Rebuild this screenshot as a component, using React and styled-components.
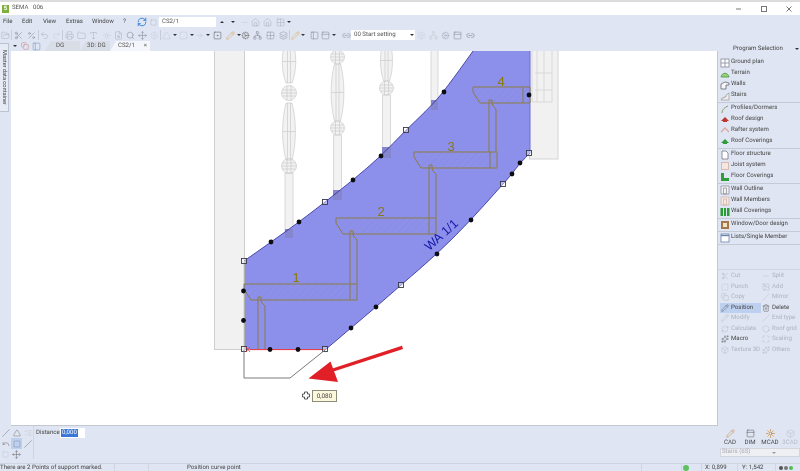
import React from 'react';
import styled, { createGlobalStyle } from 'styled-components';
import {
  FolderOpen, Scissors, Percent, Undo2, Redo2, Printer, Folder, Type, Sun, FileSearch, Search, Move, Settings,
  Triangle, Square, ArrowRight, SquareDot, Pencil, Cog, Grid2x2, Layers, Network, Minus, PanelTop, ListChecks,
  Hexagon, PanelLeft, Copy, Slash, Trash2, RefreshCw, SquareDashed, Image, Sparkles, Maximize, Box, Undo, Home, Link2
} from 'lucide-react';

const Global = createGlobalStyle`
  html, body { margin: 0; padding: 0; background: #dfe5f2; }
  * { box-sizing: border-box; }
  #root { width: 800px; height: 471px; overflow: hidden; }
`;

const Window = styled.div`
  width: 800px; height: 471px; overflow: hidden; display: flex; flex-direction: column;
  background: #dfe5f2; color: #444; font: 6.1px/1 Roboto, "Liberation Sans", sans-serif;
  text-rendering: geometricPrecision;
  filter: blur(0.3px);
`;
const TitleBar = styled.div`
  height: 15px; flex: none; background: #fff; border-top: 2px solid #dcdcdc;
  display: flex; align-items: center; padding-left: 2px; gap: 3px;
`;
const Logo = styled.div`
  width: 7px; height: 8px; background: #7fb23c; color: #fff; font-size: 6px; font-weight: 700;
  display: flex; align-items: center; justify-content: center;
`;
const Title = styled.span`flex: 1; color: #555; white-space: pre;`;
const WinBtn = styled.div`width: 22px; display: flex; justify-content: center; color: #777;`;
const MenuBar = styled.div`height: 14px; flex: none; display: flex; align-items: center;`;
const Menu = styled.span`width: ${p => p.$w}px; flex: none; padding-left: 3px; color: #444;`;
const Combo = styled.div`
  width: ${p => p.$w}px; height: 10px; flex: none; background: #fff; color: #555; padding-left: 3px;
  display: flex; align-items: center; justify-content: space-between;
`;
const Caret = styled.i`
  display: block; flex: none; width: 0; height: 0; margin: 0 auto;
  border-left: 2px solid transparent; border-right: 2px solid transparent;
  border-${p => (p.$up ? 'bottom' : 'top')}: 2px solid ${p => p.$c || '#333'};
`;
const EndCaret = styled(Caret)`margin: 0 1px 0 0;`;
const ToolBar = styled.div`height: 12px; flex: none; display: flex; align-items: center;`;
const Cell = styled.div`
  width: ${p => p.$w}px; height: 11px; flex: none; display: flex; align-items: center; justify-content: center;
  color: ${p => p.$c || '#a4a9b4'};
`;
const VSep = styled.div`width: 1px; height: 10px; flex: none; background: #c6ccd8;`;
const Work = styled.div`flex: 1; min-height: 0; display: flex;`;
const LeftArea = styled.div`width: 718px; flex: none; display: flex; flex-direction: column;`;
const UpperRow = styled.div`height: 385px; flex: none; display: flex;`;
const Rail = styled.div`width: 11px; flex: none; padding: 2px 0 0 0;`;
const RailTab = styled.div`
  width: 9px; height: 69px; background: #e6ebf5; border: 1px solid #bcc3d0; border-left: none;
  writing-mode: vertical-rl; text-align: center; font-size: 5.6px; line-height: 8px; color: #444;
`;
const Center = styled.div`width: 707px; flex: none; display: flex; flex-direction: column;`;
const TabStrip = styled.div`height: 10px; flex: none; display: flex; align-items: flex-end;`;
const StripIcon = styled.div`width: ${p => p.$w}px; flex: none; height: 10px; display: flex; align-items: center; justify-content: center; color: ${p => p.$c || '#6a86b8'};`;
const Tab = styled.div`
  width: ${p => p.$w}px; height: 10px; flex: none; display: flex; align-items: center; justify-content: space-between;
  padding: 0 3px 0 ${p => p.$pl}px; color: #555; white-space: nowrap;
  background: ${p => (p.$active ? '#f4f6fb' : '#d9dde6')};
  clip-path: polygon(0 100%, 6px 0, 100% 0, 100% 100%);
`;
const Canvas = styled.div`
  height: 375px; flex: none; position: relative; background: #fff; border-right: 1px solid #c3c7cf; border-bottom: 1px solid #c3c7cf;
  svg { display: block; }
`;
const Hint = styled.div`
  position: absolute; left: 301px; top: 339px; width: 25px; height: 12px; background: #fbf8dc; border: 1px solid #8d8d7a;
  display: flex; align-items: center; justify-content: center; color: #444; font-size: 6.3px;
`;
const BottomPanel = styled.div`flex: 1; display: flex; min-height: 0;`;
const Nudge = styled.div`
  width: 34px; flex: none; display: grid; grid-template-columns: repeat(3, 11px); grid-auto-rows: 11px; padding-top: 1px;
  border-right: 1px solid #cfd5e2; height: 33px;
`;
const NudgeBtn = styled.div`
  display: flex; align-items: center; justify-content: center; color: ${p => (p.$dim ? '#b6bbc6' : '#555')};
  background: ${p => (p.$on ? '#bdd0ef' : 'transparent')};
`;
const DistanceRow = styled.div`display: flex; align-items: flex-start; padding: 2px 0 0 2px; gap: 1px;`;
const DistanceLabel = styled.span`line-height: 10px; width: 23px;`;
const DistanceBox = styled.div`width: 25px; height: 10px; background: #fff; padding-left: 1px; display: flex; align-items: center;`;
const Selected = styled.span`background: #3a76d6; color: #fff; line-height: 8px; padding: 0 1px;`;
const RightPanel = styled.div`width: 82px; flex: none; display: flex; flex-direction: column; padding-bottom: 6px;`;
const PanelHead = styled.div`height: 15px; margin-bottom: 1px; flex: none; display: flex; align-items: center; padding: 1px 0 0 15px; color: #444;`;
const HeadText = styled.span`width: 60px; white-space: nowrap;`;
const Sep = styled.div`height: 2px; flex: none; border-bottom: 1px solid #c4cad6;`;
const Row = styled.div`height: 11px; flex: none; display: flex; align-items: center; padding-left: 2px; gap: 1px; color: #444; white-space: nowrap;`;
const ToolGrid = styled.div`
  margin-top: 24px; border-top: 1px solid #cfd5e2; padding: 1px 0 0 2px; display: grid;
  grid-template-columns: 41px 39px; grid-auto-rows: 10.5px;
`;
const ToolItem = styled.div`
  display: flex; align-items: center; gap: 2px; padding-left: 1px; white-space: nowrap;
  color: ${p => (p.$on ? '#444' : '#adb3bf')};
  background: ${p => (p.$sel ? '#bdd0ef' : 'transparent')};
`;
const ModeRow = styled.div`margin-top: auto; display: grid; grid-template-columns: repeat(4, 20px); padding-left: 2px; margin-bottom: 2px;`;
const Mode = styled.div`
  display: flex; flex-direction: column; align-items: center; gap: 2px; color: ${p => (p.$dim ? '#b4bac6' : '#444')};
`;
const ModeSelect = styled.div`
  height: 9px; margin-left: 2px; background: #eeeff2; border: 1px solid #d3d6dd; color: #a8adb8; flex: none;
  display: flex; align-items: center; justify-content: space-between; padding: 0 1px;
`;
const StatusBar = styled.div`height: 8px; flex: none; display: flex; border-top: 1px solid #d0d5e0; color: #444; overflow: hidden;`;
const StatusCell = styled.div`
  width: ${p => p.$w}px; flex: none; border-right: ${p => (p.$plain ? 'none' : '1px solid #d0d5e0')}; padding: 1px 0 0 ${p => p.$pl || 0}px;
  display: flex; align-items: center; gap: 1px; white-space: nowrap;
`;
const Led = styled.i`width: ${p => p.$s}px; height: ${p => p.$s}px; border-radius: 50%; background: ${p => p.$c}; flex: none; display: block;`;

const I = ({ as: C, s = 9, w = 1.2, c }) => <C size={s} strokeWidth={w} color={c} />;

const Mini = ({ children, s = 10 }) => <svg width={s} height={s} viewBox="0 0 10 10">{children}</svg>;

const tools = [
  [FolderOpen, 11], 'sep', [Scissors, 13, '#778'], [Percent, 13, '#778'], 'sep', [Undo2, 11], [Redo2, 12, '#c6cad2'], 'sep',
  [Printer, 13], [Folder, 11], [Type, 13], [Sun, 12, '#c0c4cc'], [FileSearch, 12], [Search, 12, '#778'], [Move, 12, '#778'],
  [Settings, 12, '#c6cad2'], 'sep', [Triangle, 11, '#c0c4cc'], 'c', [Square, 12, '#c0c4cc'], 'c', [ArrowRight, 11, '#c0c4cc'], 'c',
  [SquareDot, 14, '#444'], [Pencil, 12, '#d9942c'], 'c', [Cog, 9, '#666'], [Network, 14, '#778'], [Grid2x2, 13, '#889'], [Layers, 12, '#889'], 'sep',
  [Pencil, 10, '#e0a030'], 'c', ['gap', 4], [PanelLeft, 11, '#778'], [PanelTop, 11, '#778'], 'c', ['gap', 5], [Link2, 10, '#778']
];
const tailTools = [[Settings, 12, '#c6cad2'], [Network, 13, '#c6cad2'], [Cog, 11, '#aab'], [PanelTop, 13, '#778'], [Link2, 13, '#667']];

const listIcons = {
  ground: <><rect x="1" y="1" width="8" height="8" fill="#fff" stroke="#889" strokeWidth=".8"/><path d="M5 1v8M1 5h8" stroke="#889" strokeWidth=".8"/></>,
  terrain: <><path d="M1 8c1-5 7-5 8 0z" fill="#9ccf7c" stroke="#3f9b3f" strokeWidth=".8"/></>,
  walls: <path d="M1 9V4l4-2 4 1v2H6v4z" fill="#f6f6f6" stroke="#667" strokeWidth=".8"/>,
  stairs: <path d="M1 9h8V2L6 4v2H4v1H2z" fill="#eee" stroke="#999" strokeWidth=".7"/>,
  profiles: <path d="M2 9C2 6 5 3 8 2" fill="none" stroke="#8a9a60" strokeWidth="1"/>,
  roof: <path d="M1 6l4-4 4 4-2 0v1H3V6z" fill="#c0342c"/>,
  rafter: <path d="M1 6l4-4 4 4" fill="none" stroke="#d9a8a0" strokeWidth="1.3"/>,
  covers: <path d="M1 6l4-4 4 4-2 0v1H3V6z" fill="#2f9e3a"/>,
  floor: <path d="M2 1h4l2 2v6H2z" fill="#fff" stroke="#778" strokeWidth=".8"/>,
  joist: <rect x="1.5" y="1.5" width="7" height="7" fill="#f4e6e0" stroke="#d4b0a4" strokeWidth=".8"/>,
  floorC: <path d="M1 1h3v5h5v3H1z" fill="#2f9e3a"/>,
  outline: <path d="M1 1h8v8H1zM3.5 3h3v6h-3z" fill="#f2f2f2" stroke="#889" strokeWidth=".7"/>,
  members: <path d="M1 1h8v8H1zM3.5 3h3v6h-3z" fill="#f4e6e0" stroke="#d0b0a4" strokeWidth=".7"/>,
  wallC: <path d="M0.5 1h2.5v8H.5zM4 1h2v8H4zM7 1h2.5v8H7z" fill="#2a9a34"/>,
  door: <><rect x="1" y="1" width="8" height="8" fill="#a5784c"/><rect x="3" y="3" width="4" height="4" fill="#f3e2c4"/></>,
  lists: <><rect x="1" y="1" width="8" height="8" fill="#fff" stroke="#6c86ac" strokeWidth=".8"/><path d="M1 2.5h8" stroke="#6c86ac" strokeWidth="1.4"/></>
};

const sections = [
  [['ground', 'Ground plan'], ['terrain', 'Terrain'], ['walls', 'Walls'], ['stairs', 'Stairs']],
  [['profiles', 'Profiles/Dormers'], ['roof', 'Roof design'], ['rafter', 'Rafter system'], ['covers', 'Roof Coverings']],
  [['floor', 'Floor structure'], ['joist', 'Joist system'], ['floorC', 'Floor Coverings']],
  [['outline', 'Wall Outline'], ['members', 'Wall Members'], ['wallC', 'Wall Coverings']],
  [['door', 'Window/Door design']],
  [['lists', 'Lists/Single Member']]
];

const toolItems = [
  [Scissors, 'Cut'], [Minus, 'Split'], [SquareDashed, 'Punch'], [Image, 'Add'], [Copy, 'Copy'], [Slash, 'Mirror'],
  [Pencil, 'Position', true, true], [Trash2, 'Delete', true], [Pencil, 'Modify'], [Slash, 'End type'],
  [RefreshCw, 'Calculate'], [Hexagon, 'Roof grid'], [Sparkles, 'Macro', true], [Maximize, 'Scaling'], [Box, 'Texture 3D'], [Sparkles, 'Others']
];

const vase = (t, b, w) => {
  const m = t + (b - t) * 0.5;
  return `M-3 ${t}C${-w} ${t + (b - t) * 0.3} ${-w} ${t + (b - t) * 0.7} -3 ${b}H3C${w} ${t + (b - t) * 0.7} ${w} ${t + (b - t) * 0.3} 3 ${t}ZM-1.5 ${t}V${b}M1.5 ${t}V${b}M${-w * 0.85} ${m}H${w * 0.85}`;
};
const ball = (y, r) => `M${-r} ${y}a${r} ${r} 0 1 0 ${2 * r} 0a${r} ${r} 0 1 0 ${-2 * r} 0ZM${-r} ${y}H${r}M${-r * 0.85} ${y - 3}H${r * 0.85}M${-r * 0.85} ${y + 3}H${r * 0.85}M-2 ${y - r}V${y + r}M2 ${y - r}V${y + r}`;
const shaft = (t, b) => `M-4 ${t}V${b}H4V${t}Z`;

const Baluster = ({ x, d }) => (
  <path transform={`translate(${x} 0)`} d={d} fill="#f2f2f2" stroke="#cbcbcb" strokeWidth=".7" />
);

const Step = ({ l, t, r, rx, bottom, n }) => (
  <g>
    <path d={`M${l} ${t}V${t + 5}L${l + 7} ${t + 16}H${r}V${t}Z`} fill="url(#hatch)" stroke="#8b7c45" strokeWidth="1" />
    <path d={`M${r - 7} ${t}V${t + 16}`} stroke="#8b7c45" fill="none" />
    <path d={`M${rx} ${bottom}V${t + 13}h3v3l1 3 3 3V${bottom}`} fill="none" stroke="#8b7c45" strokeWidth="1" />
    <text x={n.x} y={n.y} fontFamily="Liberation Sans, sans-serif" fontSize="13" fill="#8a7a12" textAnchor="middle">{n.v}</text>
  </g>
);

const upperPts = [[473,51],[444,92],[425,112],[406,130],[381,156],[353,180],[325,202],[299,222],[271,242],[244,261]];
const lowerPts = [[530,153],[520,163],[512,174],[503,184],[471,220],[437,254],[401,285],[376,307],[351,328],[325,350]];

const smooth = pts => {
  let d = `M${pts[0][0]} ${pts[0][1]}`;
  for (let i = 1; i < pts.length - 1; i += 1) {
    const mx = (pts[i][0] + pts[i + 1][0]) / 2;
    const my = (pts[i][1] + pts[i + 1][1]) / 2;
    d += `Q${pts[i][0]} ${pts[i][1]} ${mx} ${my}`;
  }
  const e = pts[pts.length - 1];
  return `${d}L${e[0]} ${e[1]}`;
};
const upper = smooth(upperPts);
const lowerBack = smooth([...lowerPts].reverse());
const lower = smooth(lowerPts);

const dots = [[444,92],[381,156],[353,180],[299,222],[271,242],[529,95],[520,163],[512,174],[471,220],[437,254],[243.5,291],[243.5,320.5],[270,349.5],[298,349.5],[351,328],[376,307]];
const squares = [[406,130],[325,202],[244,261],[529,153],[503,184],[401,285],[325,349],[244,349]];

const Drawing = () => (
  <svg width="706" height="374" viewBox="11 51 706 374">
    <defs>
      <pattern id="hatch" width="5" height="5" patternUnits="userSpaceOnUse" patternTransform="rotate(-45)">
        <rect width="5" height="5" fill="#8c90ea" />
        <path d="M0 0H5" stroke="#8585c6" strokeWidth=".6" />
      </pattern>
    </defs>
    <rect x="214.5" y="40" width="30" height="309.5" fill="#f1f1f1" stroke="#cfcfcf" />
    <rect x="529.5" y="40" width="28.5" height="119" fill="#f1f1f1" stroke="#d4d4d4" />
    <path d="M532 40V102H552V40M537 40V102M544 40V102M535 73H552M535 90H552" fill="none" stroke="#d4d4d4" strokeWidth=".8" />
    <Baluster x={289} d={`${vase(40, 83, 8)}${ball(93, 7.5)}${vase(103, 160, 7.5)}${ball(166, 7.5)}${shaft(173, 238)}`} />
    <Baluster x={337.5} d={`${ball(57, 7)}${vase(64, 121, 7.5)}${ball(128, 7)}${shaft(135, 200)}`} />
    <Baluster x={386.5} d={`${vase(40, 81, 7)}${ball(88, 7)}${shaft(95, 158)}`} />
    <Baluster x={434.5} d="M-3.5 40V110H3.5V40Z" />
    <path d={`${upper}L244 350L${lowerPts[lowerPts.length - 1].join(' ')}${lowerBack.replace(/^M[^Q]*/, '')}L530 51Z`} fill="#8c90ea" />
    <path d="M285 229H293V238H285ZM333 190H342V200H333ZM382 147H391V158H382ZM431 100H438V110H431Z" fill="#8686ce" />
    <path d={upper} fill="none" stroke="#2c2c96" strokeWidth=".8" />
    <path d={lower} fill="none" stroke="#2c2c96" strokeWidth=".8" />
    <path d="M530 51V153" stroke="#6a6ed8" />
    <path d="M244 261V350" stroke="#d8d86a" />
    <path d="M250 349.6H325" stroke="#ee3a3a" />
    <Step l={244} t={284} r={357} rx={258} bottom={349} n={{ x: 296, y: 282, v: '1' }} />
    <Step l={336} t={218} r={436} rx={350} bottom={284} n={{ x: 381, y: 216, v: '2' }} />
    <Step l={414} t={152} r={497} rx={429} bottom={218} n={{ x: 451, y: 151, v: '3' }} />
    <Step l={473} t={87} r={530} rx={489} bottom={152} n={{ x: 501, y: 86, v: '4' }} />
    <text transform="translate(444 238) rotate(-42)" fontFamily="Liberation Sans, sans-serif" fontSize="12.5" fill="#1616a8" textAnchor="middle">WA 1/1</text>
    {dots.map(([x, y]) => <circle key={`${x}-${y}`} cx={x} cy={y} r="2.4" fill="#0c0c14" />)}
    {squares.map(([x, y]) => <rect key={`${x}-${y}`} x={x - 2.5} y={y - 2.5} width="5" height="5" fill="#ffffff66" stroke="#3a3a4a" strokeWidth=".9" />)}
    <path d="M246 347l4 5M250 347l-4 5" stroke="#ee3a3a" strokeWidth=".8" />
    <path d="M244 350V378H290L325 350" fill="none" stroke="#7a7a7a" strokeWidth="1" />
    <path d="M402.5 347.3L333 370" stroke="#e01f26" strokeWidth="3.4" />
    <path d="M308.5 378.5L330.5 361.5L338 382Z" fill="#e01f26" />
    <path d="M304.5 392h3v2h2v3h-2v2h-3v-2h-2v-3h2z" fill="#fff" stroke="#333" strokeWidth=".8" />
  </svg>
);

export default function App() {
  return (
    <>
      <Global />
      <Window>
        <TitleBar>
          <Logo>5</Logo>
          <Title>SEMA   006</Title>
          <WinBtn><svg width="8" height="8" viewBox="0 0 8 8"><path d="M1 4h5" stroke="#777" /></svg></WinBtn>
          <WinBtn><svg width="8" height="8" viewBox="0 0 8 8"><rect x="1.5" y="1.5" width="5" height="5" fill="none" stroke="#777" /></svg></WinBtn>
          <WinBtn><svg width="8" height="8" viewBox="0 0 8 8"><path d="M1.5 1.5l5 5M6.5 1.5l-5 5" stroke="#777" /></svg></WinBtn>
        </TitleBar>
        <MenuBar>
          <Menu $w={19}>File</Menu><Menu $w={21}>Edit</Menu><Menu $w={23}>View</Menu><Menu $w={26}>Extras</Menu><Menu $w={31}>Window</Menu><Menu $w={16}>?</Menu>
          <Cell $w={11} $c="#2f7fd6"><I as={RefreshCw} s={10} w={2.2} /></Cell>
          <Cell $w={12}><I as={Square} s={7} /></Cell>
          <Combo $w={57}>CS2/1</Combo>
          <Cell $w={11}><Caret $up /></Cell>
          <Cell $w={12}><Caret /></Cell>
          <Cell $w={11} $c="#c0c4cc"><I as={Minus} /></Cell>
          <Cell $w={11}><I as={Home} /></Cell>
          <Cell $w={13}><I as={Home} /></Cell>
          <Cell $w={12}><I as={Grid2x2} /></Cell>
          <Cell $w={6}><Caret /></Cell>
        </MenuBar>
        <ToolBar>
          {tools.map((t, i) => {
            if (t === 'sep') return <VSep key={i} />;
            if (t === 'c') return <Cell key={i} $w={5}><Caret /></Cell>;
            if (t[0] === 'gap') return <Cell key={i} $w={t[1]} />;
            return <Cell key={i} $w={t[1]} $c={t[2]}><I as={t[0]} /></Cell>;
          })}
          <Combo $w={64}>00 Start setting<EndCaret /></Combo>
          {tailTools.map((t, i) => <Cell key={i} $w={t[1]} $c={t[2]}><I as={t[0]} /></Cell>)}
        </ToolBar>
        <Work>
          <LeftArea>
            <UpperRow>
              <Rail><RailTab>Master data container</RailTab></Rail>
              <Center>
                <TabStrip>
                  <StripIcon $w={8}><Caret /></StripIcon>
                  <StripIcon $w={11} $c="#c66"><I as={Copy} s={8} /></StripIcon>
                  <StripIcon $w={12}><I as={PanelLeft} s={9} /></StripIcon>
                  <StripIcon $w={3} />
                  <Tab $w={35} $pl={11}>DG</Tab>
                  <Tab $w={30} $pl={7}>3D: DG</Tab>
                  <Tab $w={40} $pl={8} $active>CS2/1<span>×</span></Tab>
                </TabStrip>
                <Canvas>
                  <Drawing />
                  <Hint>0,080</Hint>
                </Canvas>
              </Center>
            </UpperRow>
            <BottomPanel>
              <Nudge>
                <NudgeBtn><I as={Slash} s={8} /></NudgeBtn>
                <NudgeBtn><I as={Triangle} s={8} /></NudgeBtn>
                <NudgeBtn $dim><I as={ListChecks} s={8} /></NudgeBtn>
                <NudgeBtn><I as={Undo} s={8} /></NudgeBtn>
                <NudgeBtn $on><I as={SquareDashed} s={8} /></NudgeBtn>
                <NudgeBtn><I as={Slash} s={8} /></NudgeBtn>
                <NudgeBtn $dim><I as={Square} s={7} /></NudgeBtn>
                <NudgeBtn><I as={Move} s={9} /></NudgeBtn>
              </Nudge>
              <DistanceRow>
                <DistanceLabel>Distance:</DistanceLabel>
                <DistanceBox><Selected>0,000</Selected></DistanceBox>
              </DistanceRow>
            </BottomPanel>
          </LeftArea>
          <RightPanel>
            <PanelHead><HeadText>Program Selection</HeadText><Caret /></PanelHead>
            {sections.map((sec, i) => (
              <React.Fragment key={i}>
                {sec.map(([k, label]) => <Row key={k}><Mini>{listIcons[k]}</Mini>{label}</Row>)}
                <Sep />
              </React.Fragment>
            ))}
            <ToolGrid>
              {toolItems.map(([Ic, label, on, sel]) => (
                <ToolItem key={label} $on={on} $sel={sel}><I as={Ic} s={8} w={1.2} />{label}</ToolItem>
              ))}
            </ToolGrid>
            <ModeRow>
              <Mode><I as={Pencil} s={9} c="#c07828" />CAD</Mode>
              <Mode><I as={PanelTop} s={9} />DIM</Mode>
              <Mode><I as={Sun} s={9} c="#c87818" w={2} />MCAD</Mode>
              <Mode $dim><I as={Box} s={9} />3CAD</Mode>
            </ModeRow>
            <ModeSelect>Stairs (6S)<Caret $c="#999" /></ModeSelect>
          </RightPanel>
        </Work>
        <StatusBar>
          <StatusCell $w={115}>There are 2 Points of support marked.</StatusCell>
          <StatusCell $w={34} />
          <StatusCell $w={493} $pl={38}>Position curve point</StatusCell>
          <StatusCell $w={40} />
          <StatusCell $w={20} $pl={1}><Led $s={6} $c="#5ec05e" /></StatusCell>
          <StatusCell $w={36} $pl={3}>X: 0,899</StatusCell>
          <StatusCell $w={38} $pl={4}>Y: 1,542</StatusCell>
          <StatusCell $w={24} $pl={3} $plain>
            <Led $s={4} $c="#555" /><Led $s={4} $c="#777" /><Led $s={4} $c="#4fbf4f" />
          </StatusCell>
        </StatusBar>
      </Window>
    </>
  );
}
